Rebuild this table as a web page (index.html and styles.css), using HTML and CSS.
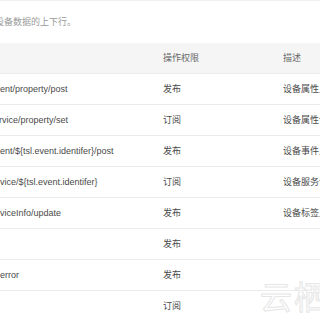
FILE: index.html
```html
<!DOCTYPE html>
<html lang="zh-CN">
  <head>
    <meta charset="UTF-8" />
    <meta name="viewport" content="width=device-width, initial-scale=1.0" />
    <title>Topic 列表</title>
    <link rel="stylesheet" href="styles.css">
  </head>
  <body>
    <div class="page">
      <p class="intro">设备数据的上下行。</p>
      <table class="topics">
        <colgroup>
          <col class="col-topic" />
          <col class="col-op" />
          <col class="col-desc" />
        </colgroup>
        <thead>
          <tr>
            <th></th>
            <th>操作权限</th>
            <th>描述</th>
          </tr>
        </thead>
        <tbody>
          <tr>
            <td>ent/property/post</td>
            <td>发布</td>
            <td>设备属性上报</td>
          </tr>
          <tr>
            <td class="cut">rvice/property/set</td>
            <td>订阅</td>
            <td>设备属性设置</td>
          </tr>
          <tr>
            <td>ent/${tsl.event.identifer}/post</td>
            <td>发布</td>
            <td>设备事件上报</td>
          </tr>
          <tr>
            <td>vice/${tsl.event.identifer}</td>
            <td>订阅</td>
            <td>设备服务调用</td>
          </tr>
          <tr>
            <td>viceInfo/update</td>
            <td>发布</td>
            <td>设备标签上报</td>
          </tr>
          <tr>
            <td></td>
            <td>发布</td>
            <td></td>
          </tr>
          <tr>
            <td>error</td>
            <td>发布</td>
            <td></td>
          </tr>
          <tr>
            <td></td>
            <td>订阅</td>
            <td></td>
          </tr>
        </tbody>
      </table>
      <div class="watermark">云栖</div>
    </div>
  </body>
</html>
```

FILE: styles.css
```css
body {
  margin: 0;
  background-color: #fff;
  font-family: "Liberation Sans", "Noto Sans CJK SC", sans-serif;
  font-size: 9px;
  color: #4a4a4a;
  overflow: hidden;
}
.page {
  position: relative;
  width: 320px;
  height: 320px;
  overflow: hidden;
  border-top: 1px solid #f2f2f2;
  box-sizing: border-box;
}
.intro {
  margin: 15px 0 15px 0;
  line-height: 12px;
  color: #999;
  white-space: nowrap;
  text-indent: -5px;
}
.topics {
  border-collapse: collapse;
  table-layout: fixed;
  width: 420px;
}
.col-topic {
  width: 155px;
}
.col-op {
  width: 120px;
}
.col-desc {
  width: 145px;
}
.topics th,
.topics td {
  height: 30px;
  padding: 0 8px;
  text-align: left;
  white-space: nowrap;
  overflow: hidden;
  border-bottom: 1px solid #ebebeb;
  box-sizing: border-box;
}
.topics th {
  height: 30px;
  background-color: #f5f5f5;
  color: #666;
  font-weight: normal;
}
.topics td {
  height: 31px;
}
.topics td:first-child,
.topics th:first-child {
  padding-left: 0;
}
.topics td.cut {
  text-indent: -1px;
}
.watermark {
  position: absolute;
  right: -8px;
  bottom: 2px;
  font-size: 32px;
  color: #fff;
  -webkit-text-stroke: 1px #e6e6e6;
  letter-spacing: 2px;
}
```
